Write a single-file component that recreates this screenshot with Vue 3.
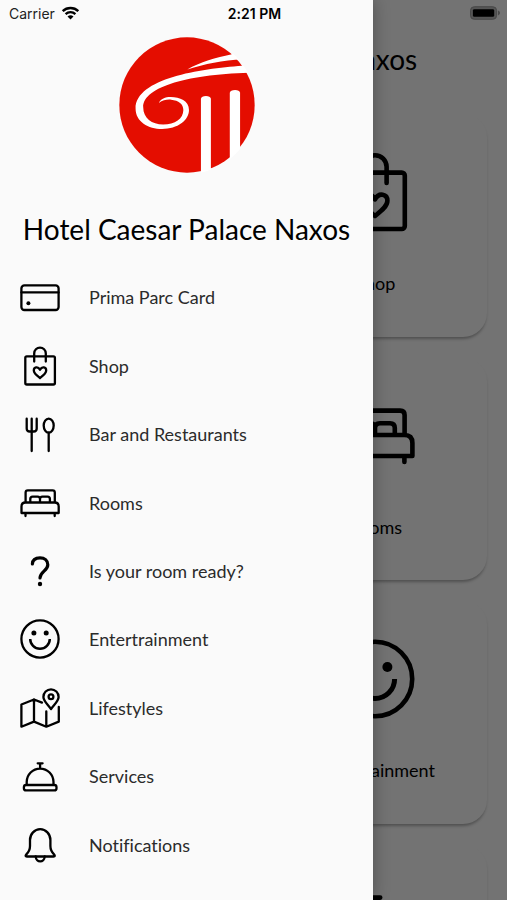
<script setup>
import { h } from 'vue'

const title = 'Hotel Caesar Palace Naxos'

const icons = {
  card: [
    ['rect', { x: 1.4, y: 8.4, width: 37.2, height: 24.6, rx: 3 }],
    ['path', { d: 'M1.4 15.4H38.6' }],
    ['circle', { cx: 8.4, cy: 26.3, r: 2, class: 'solid' }],
  ],
  shop: [
    ['rect', { x: 5.3, y: 10.3, width: 29.6, height: 28.2, rx: 1.5 }],
    ['path', { d: 'M14.2 15.5V7.4a5.8 5.8 0 0 1 11.6 0V15.5' }],
    ['path', { d: 'M20 32C17 29.6 13.8 27.2 13.8 24.4C13.8 21 18 20 20 23.7C22 20 26.2 21 26.2 24.4C26.2 27.2 23 29.6 20 32Z' }],
  ],
  bar: [
    ['path', { d: 'M6.7 4.7V14.5Q6.7 17.5 9.7 17.5H13.7Q16.7 17.5 16.7 14.5V4.7M11.7 4.7V37' }],
    ['ellipse', { cx: 28.7, cy: 11.6, rx: 5, ry: 7 }],
    ['path', { d: 'M28.7 18.6V37' }],
  ],
  rooms: [
    ['path', { d: 'M5.6 18.7V9.5Q5.6 7.3 7.8 7.3H32.6Q34.8 7.3 34.8 9.5V18.7' }],
    ['path', { d: 'M10.3 18.7V16Q10.3 13.6 12.7 13.6H17.5Q20 13.6 20 16V18.7M20 16Q20 13.6 22.5 13.6H27.5Q29.9 13.6 29.9 16V18.7' }],
    ['path', { d: 'M1.5 30V23.5Q1.5 19.5 5.5 19.5H34.7Q38.7 19.5 38.7 23.5V30ZM5.5 30V33M34.7 30V33' }],
  ],
  question: [
    ['path', { class: 'heavy', d: 'M12.4 13C12.6 9 15.7 6.9 20 6.9C24.6 6.9 27.8 9.4 27.8 13.7C27.8 19.8 20.2 20.5 20 27' }],
    ['circle', { cx: 20, cy: 33, r: 2.2, class: 'solid' }],
  ],
  smile: [
    ['circle', { cx: 20, cy: 20, r: 18.6 }],
    ['circle', { cx: 13.9, cy: 14, r: 2.5, class: 'solid' }],
    ['circle', { cx: 26.2, cy: 14, r: 2.5, class: 'solid' }],
    ['path', { class: 'blunt', d: 'M10.2 20a9.8 9.8 0 0 0 19.6 0' }],
  ],
  map: [
    ['path', { d: 'M22 14.6L14 11.5L1.4 16.5V38.7L14 33.6L26.3 38.7L38.8 33.6V19M14 11.5V33.6M26.3 23.5V38.7' }],
    ['path', { d: 'M31 21C28 16.5 23.4 13 23.4 8.9a7.6 7.6 0 0 1 15.2 0C38.6 13 34 16.5 31 21Z' }],
    ['circle', { cx: 31, cy: 8.7, r: 2.4 }],
  ],
  service: [
    ['rect', { x: 3.9, y: 29, width: 32.6, height: 5.4, rx: 2.2 }],
    ['path', { d: 'M6.7 28.8V26a13.4 13.4 0 0 1 26.8 0V28.8M20.1 12V7.5M17.7 7.3H22.6' }],
  ],
  bell: [
    ['path', { d: 'M10 15a10.200 10.800 0 0 1 20.400 0V21C30.400 25 31.600 27 34 29.300Q35.800 31.500 33.500 31.500H6.900Q4.600 31.500 6.400 29.300C8.800 27 10 25 10 21Z' }],
    ['path', { d: 'M15.700 31.500C16 38 24.400 38 24.700 31.500' }],
  ],
}

const AppIcon = ({ name }) =>
  h(
    'svg',
    { viewBox: '0 0 40 40', 'aria-hidden': 'true' },
    icons[name].map(([tag, attrs]) => h(tag, attrs)),
  )
AppIcon.props = ['name']

const items = [
  { icon: 'card', label: 'Prima Parc Card' },
  { icon: 'shop', label: 'Shop' },
  { icon: 'bar', label: 'Bar and Restaurants' },
  { icon: 'rooms', label: 'Rooms' },
  { icon: 'question', label: 'Is your room ready?' },
  { icon: 'smile', label: 'Entertrainment' },
  { icon: 'map', label: 'Lifestyles' },
  { icon: 'service', label: 'Services' },
  { icon: 'bell', label: 'Notifications' },
]
const tiles = items.slice(0, 8)
</script>

<template>
  <div class="app">
    <main class="home" inert>
      <h2 class="home-title">{{ title }}</h2>
      <div class="tiles">
        <a v-for="item in tiles" :key="item.label" class="tile" href="#">
          <AppIcon class="icon icon-large" :name="item.icon" />
          <span>{{ item.label }}</span>
        </a>
      </div>
    </main>

    <div class="scrim"></div>

    <aside class="drawer">
      <svg class="logo" viewBox="26 20 408 410" role="img" aria-label="Hotel logo">
        <defs>
          <clipPath id="disc"><circle cx="230" cy="225" r="208" /></clipPath>
        </defs>
        <circle class="logo-disc" cx="230" cy="225" r="204" />
        <g class="logo-cut" clip-path="url(#disc)">
          <path d="M231 118C268 96 320 82 362 73L400 60V87C335 89 285 102 231 118Z" />
          <path d="M440 103L396 107C270 116 75 145 75 236C75 275 113 297 155 297C202 297 236 271 236 240C236 212 208 201 181 201C164 201 151 207 145 219C157 210 170 208 182 209C205 211 219 222 219 240C219 266 194 284 158 284C124 284 98 265 98 232C98 168 240 131 440 127Z" />
          <path d="M272 440V206Q274 198 287 198Q300 198 302 206V440Z" />
          <path d="M359 440V188Q361 180 375 180Q388 180 390 188V440Z" />
        </g>
      </svg>
      <h1 class="drawer-title">{{ title }}</h1>
      <nav class="menu">
        <a v-for="item in items" :key="item.label" class="menu-item" href="#">
          <AppIcon class="icon" :name="item.icon" />
          <span>{{ item.label }}</span>
        </a>
      </nav>
    </aside>

    <header class="status">
      <div class="carrier">
        <span>Carrier</span>
        <svg class="wifi" viewBox="0 0 18 14" aria-hidden="true">
          <path d="M1.2 5.2C5.6 1 12.4 1 16.8 5.2" />
          <path d="M4.1 8.1C6.9 5.5 11.1 5.5 13.9 8.1" />
          <path class="wifi-dot" d="M6 10.4Q9 7.9 12 10.4L9 13.6Z" />
        </svg>
      </div>
      <time class="clock">2:21 PM</time>
      <svg class="battery" viewBox="0 0 31 14" aria-hidden="true">
        <rect class="battery-shell" x="0.5" y="0.5" width="27" height="13" rx="4" />
        <rect x="3" y="3" width="22" height="8" rx="1.5" />
        <path class="battery-tip" d="M29 4.5Q31 5.5 31 7T29 9.5Z" />
      </svg>
    </header>
  </div>
</template>

<style>
body {
  margin: 0;
  background: #fafafa;
}
</style>

<style scoped>
.app {
  position: relative;
  height: 100vh;
  overflow: hidden;
  background: #fafafa;
  color: #000;
  font-family: Lato, "Open Sans", sans-serif;
  font-variant-ligatures: none;
}

a {
  color: inherit;
  text-decoration: none;
}

.status {
  position: absolute;
  inset: 0 0 auto;
  display: grid;
  grid-template-columns: 1fr auto 1fr;
  align-items: center;
  height: 26px;
  padding: 0 7px 0 9px;
  font-family: Inter, "Liberation Sans", sans-serif;
  font-size: 14px;
  color: #222;
}

.carrier {
  display: flex;
  align-items: center;
  gap: 6px;
}

.wifi {
  width: 19px;
  height: 14px;
  fill: none;
  stroke: #000;
  stroke-width: 2.4;
}

.wifi-dot {
  fill: #000;
  stroke: none;
}

.clock {
  font-weight: 600;
  color: #000;
}

.battery {
  justify-self: end;
  width: 30px;
  height: 14px;
}

.battery-shell {
  fill: #555;
  stroke: #484848;
}

.battery-tip {
  fill: #484848;
}

.home {
  padding: 39px 20px 0;
}

.home-title,
.drawer-title {
  margin: 0;
  font-size: 28px;
  line-height: 40px;
  font-weight: 400;
  text-align: center;
  white-space: nowrap;
}

.tiles {
  display: grid;
  grid-template-columns: 1fr 1fr;
  gap: 20px;
  margin-top: 34px;
}

.tile {
  display: flex;
  flex-direction: column;
  align-items: center;
  gap: 39px;
  box-sizing: border-box;
  aspect-ratio: 1;
  padding-top: 39px;
  border-radius: 24px;
  background: #fafafa;
  box-shadow: 0 3px 3px -1px rgba(0, 0, 0, 0.3);
  font-size: 18px;
  line-height: 24px;
}

.icon {
  flex: none;
  width: 40px;
  height: 40px;
  fill: none;
  stroke: #000;
  stroke-width: 2.3;
  stroke-linecap: round;
  stroke-linejoin: round;
}

.icon-large {
  width: 80px;
  height: 80px;
}

.icon :deep(.solid) {
  fill: #000;
  stroke: none;
}

.icon :deep(.heavy) {
  stroke-width: 3.2;
}

.icon :deep(.blunt) {
  stroke-width: 2.5;
  stroke-linecap: butt;
}

.scrim {
  position: absolute;
  inset: 0;
  background: rgba(0, 0, 0, 0.54);
}

.drawer {
  position: absolute;
  inset: 0 auto 0 0;
  display: flex;
  flex-direction: column;
  box-sizing: border-box;
  width: 373px;
  max-width: 80%;
  padding: 37px 20px 21px;
  background: #fafafa;
  box-shadow: 0 0 16px rgba(0, 0, 0, 0.3);
}

.logo {
  align-self: center;
  flex: none;
  width: 136px;
  height: 136px;
}

.logo-disc {
  fill: #e40d00;
}

.logo-cut {
  fill: #fff;
}

.drawer-title {
  margin: 36px 0 14px;
}

.menu {
  display: grid;
  flex: 1;
  grid-auto-rows: 1fr;
}

.menu-item {
  display: flex;
  align-items: center;
  gap: 29px;
  font-size: 18px;
  line-height: 24px;
  color: #2b2b2b;
}
</style>
